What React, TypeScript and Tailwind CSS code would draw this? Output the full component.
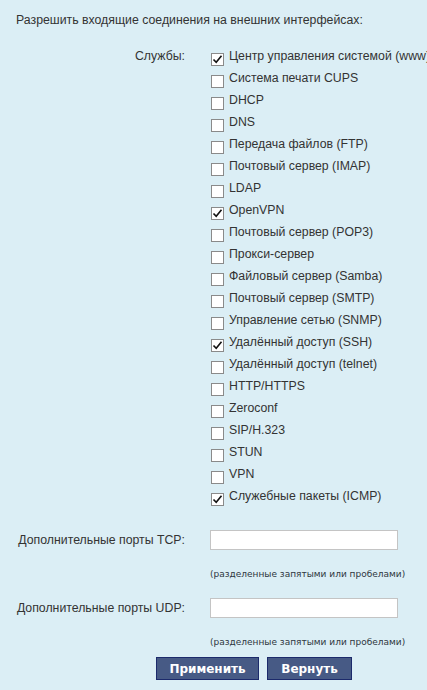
import React from "react";

const services: [string, boolean][] = [
  ["Центр управления системой (www)", true],
  ["Система печати CUPS", false],
  ["DHCP", false],
  ["DNS", false],
  ["Передача файлов (FTP)", false],
  ["Почтовый сервер (IMAP)", false],
  ["LDAP", false],
  ["OpenVPN", true],
  ["Почтовый сервер (POP3)", false],
  ["Прокси-сервер", false],
  ["Файловый сервер (Samba)", false],
  ["Почтовый сервер (SMTP)", false],
  ["Управление сетью (SNMP)", false],
  ["Удалённый доступ (SSH)", true],
  ["Удалённый доступ (telnet)", false],
  ["HTTP/HTTPS", false],
  ["Zeroconf", false],
  ["SIP/H.323", false],
  ["STUN", false],
  ["VPN", false],
  ["Служебные пакеты (ICMP)", true],
];

function Box({ checked }: { checked: boolean }) {
  return (
    <span className="mt-[8px] flex h-[13px] w-[13px] shrink-0 items-center justify-center border border-[#8a8a8a] bg-white">
      {checked && (
        <svg width="11" height="11" viewBox="0 0 11 11">
          <path d="M1.5 5.5 L4.2 8.3 L9.5 1.8" fill="none" stroke="#111" strokeWidth="1.6" />
        </svg>
      )}
    </span>
  );
}

export default function App() {
  return (
    <div
      className="min-h-[690px] w-[427px] overflow-hidden bg-[#dbeef5] text-[12.3px] text-[#333]"
      style={{ fontFamily: '"Liberation Sans", Arial, sans-serif' }}
    >
      <div className="w-[520px] pt-[11px]">
        <div className="pl-[16px] leading-[18px]">Разрешить входящие соединения на внешних интерфейсах:</div>
        <div className="mt-[16px] flex">
          <div className="w-[185px] shrink-0 text-right leading-[22px]">Службы:</div>
          <div className="ml-[26px] flex flex-col">
            {services.map(([name, c]) => (
              <div key={name} className="flex h-[22px] items-start">
                <Box checked={c} />
                <span className="ml-[5px] whitespace-nowrap leading-[22px]">{name}</span>
              </div>
            ))}
          </div>
        </div>
        <div className="mt-[22px] flex">
          <div className="w-[185px] shrink-0 text-right leading-[22px]">Дополнительные порты TCP:</div>
          <div className="ml-[25px] flex flex-col">
            <div className="mt-[1px] h-[20px] w-[188px] border border-[#c4c4c4] bg-white" />
            <div
              className="mt-[18px] whitespace-nowrap text-[9px] leading-[12px] text-[#2e3640]"
              style={{ fontFamily: '"DejaVu Sans", Verdana, sans-serif' }}
            >
              (разделенные запятыми или пробелами)
            </div>
          </div>
        </div>
        <div className="mt-[17px] flex">
          <div className="w-[185px] shrink-0 text-right leading-[22px]">Дополнительные порты UDP:</div>
          <div className="ml-[25px] flex flex-col">
            <div className="mt-[1px] h-[20px] w-[188px] border border-[#c4c4c4] bg-white" />
            <div
              className="mt-[18px] whitespace-nowrap text-[9px] leading-[12px] text-[#2e3640]"
              style={{ fontFamily: '"DejaVu Sans", Verdana, sans-serif' }}
            >
              (разделенные запятыми или пробелами)
            </div>
          </div>
        </div>
        <div
          className="ml-[156px] mt-[9px] flex gap-[8px] text-[12px] font-bold text-white"
          style={{ fontFamily: '"DejaVu Sans", Verdana, sans-serif' }}
        >
          <div className="flex h-[23px] w-[103px] items-center justify-center border border-[#1c2a6b] bg-[#475a85]">Применить</div>
          <div className="flex h-[23px] w-[85px] items-center justify-center border border-[#1c2a6b] bg-[#475a85]">Вернуть</div>
        </div>
      </div>
    </div>
  );
}
